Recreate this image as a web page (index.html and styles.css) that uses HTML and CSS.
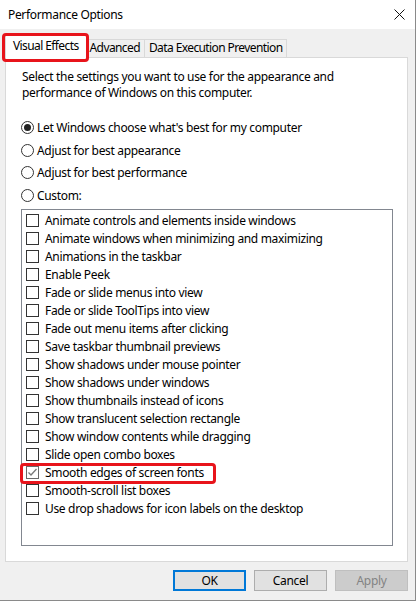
FILE: index.html
```html
<!DOCTYPE html>
<html>
  <head>
    <title>Performance Options</title>
    <link rel="stylesheet" href="styles.css">
  </head>
  <body>
    <div class="window">
      <div class="titlebar">
        <span class="title">Performance Options</span>
        <svg class="close" width="11" height="11" viewBox="0 0 11 11">
          <path d="M0.5 0.5 L10.5 10.5 M10.5 0.5 L0.5 10.5" stroke="#111" stroke-width="1" fill="none" />
        </svg>
      </div>

      <div class="content">
        <div class="tabs">
          <div class="tab active marked">Visual Effects</div>
          <div class="tab">Advanced</div>
          <div class="tab">Data Execution Prevention</div>
        </div>

        <div class="panel">
          <p class="intro">
            Select the settings you want to use for the appearance and<br />
            performance of Windows on this computer.
          </p>

          <div class="radios">
            <label class="radio"><span class="dot checked"></span>Let Windows choose what's best for my computer</label>
            <label class="radio"><span class="dot"></span>Adjust for best appearance</label>
            <label class="radio"><span class="dot"></span>Adjust for best performance</label>
            <label class="radio"><span class="dot"></span>Custom:</label>
          </div>

          <div class="list">
            <div class="item"><span class="box"></span>Animate controls and elements inside windows</div>
            <div class="item"><span class="box"></span>Animate windows when minimizing and maximizing</div>
            <div class="item"><span class="box"></span>Animations in the taskbar</div>
            <div class="item"><span class="box"></span>Enable Peek</div>
            <div class="item"><span class="box"></span>Fade or slide menus into view</div>
            <div class="item"><span class="box"></span>Fade or slide ToolTips into view</div>
            <div class="item"><span class="box"></span>Fade out menu items after clicking</div>
            <div class="item"><span class="box"></span>Save taskbar thumbnail previews</div>
            <div class="item"><span class="box"></span>Show shadows under mouse pointer</div>
            <div class="item"><span class="box"></span>Show shadows under windows</div>
            <div class="item"><span class="box"></span>Show thumbnails instead of icons</div>
            <div class="item"><span class="box"></span>Show translucent selection rectangle</div>
            <div class="item"><span class="box"></span>Show window contents while dragging</div>
            <div class="item"><span class="box"></span>Slide open combo boxes</div>
            <div class="item marked">
              <span class="box checked">
                <svg width="11" height="11" viewBox="0 0 11 11">
                  <path d="M1.5 5.5 L4 8 L9.5 2" stroke="#7a7a7a" stroke-width="1.3" fill="none" />
                </svg>
              </span>Smooth edges of screen fonts
            </div>
            <div class="item"><span class="box"></span>Smooth-scroll list boxes</div>
            <div class="item"><span class="box"></span>Use drop shadows for icon labels on the desktop</div>
          </div>
        </div>

        <div class="buttons">
          <button class="btn default">OK</button>
          <button class="btn">Cancel</button>
          <button class="btn" disabled>Apply</button>
        </div>
      </div>
    </div>
  </body>
</html>
```

FILE: styles.css
```css
body {
  margin: 0;
  font-family: "Segoe UI", "Noto Sans", sans-serif;
  font-size: 12px;
  letter-spacing: -0.33px;
  color: #000;
  background: #fff;
}
.window {
  width: 415px;
  height: 600px;
  background: #f0f0f0;
  border-right: 1px solid #8a8a8a;
  border-bottom: 1px solid #8a8a8a;
  display: flex;
  flex-direction: column;
}
.titlebar {
  height: 29px;
  background: #fff;
  display: flex;
  align-items: center;
  justify-content: space-between;
  padding: 0 10px 0 8px;
}
.title {
  font-size: 12px;
  margin-top: -1px;
}
.close {
  margin-top: -1px;
}
.content {
  padding: 5px 7px 0 5px;
}
.tabs {
  display: flex;
  align-items: flex-end;
  height: 23px;
  padding-left: 2px;
}
.tab {
  height: 17px;
  line-height: 16px;
  padding: 0 4px;
  letter-spacing: -0.6px;
  border: 1px solid #d9d9d9;
  border-bottom: none;
  margin-left: -1px;
  background: #f0f0f0;
}
.tab.active {
  height: 22px;
  line-height: 20px;
  margin-left: -2px;
  margin-right: -1px;
  padding: 0 7px;
  background: #fff;
  position: relative;
  z-index: 1;
  margin-bottom: -1px;
}
.marked {
  position: relative;
}
.marked::after {
  content: "";
  position: absolute;
  border: 3px solid #e8141b;
  border-radius: 4px;
  pointer-events: none;
}
.tab.marked::after {
  left: -4px;
  right: -3px;
  top: -3px;
  bottom: -4px;
}
.item.marked::after {
  left: -6px;
  top: -1px;
  width: 190px;
  height: 15px;
}
.panel {
  height: 505px;
  background: #fff;
  border: 1px solid #d9d9d9;
  padding: 0 14px 0 15px;
  box-sizing: border-box;
}
.intro {
  margin: 11px 0 0 1px;
  line-height: 16px;
}
.radios {
  margin-top: 15px;
  display: flex;
  flex-direction: column;
}
.radio {
  height: 22.7px;
  display: flex;
  align-items: center;
}
.dot {
  width: 11px;
  height: 11px;
  border: 1px solid #333;
  border-radius: 50%;
  margin-right: 3px;
  display: flex;
  align-items: center;
  justify-content: center;
}
.dot.checked::before {
  content: "";
  width: 7px;
  height: 7px;
  border-radius: 50%;
  background: #222;
}
.list {
  margin-top: 2px;
  height: 337px;
  border: 1px solid #828790;
  padding: 2px 4px;
  box-sizing: border-box;
}
.item {
  height: 18px;
  display: flex;
  align-items: center;
  white-space: nowrap;
}
.box {
  width: 11px;
  height: 11px;
  border: 1px solid #333;
  margin-right: 6px;
  display: flex;
  align-items: center;
  justify-content: center;
  flex: none;
}
.box.checked {
  border-color: #6a6a6a;
}
.buttons {
  display: flex;
  justify-content: flex-end;
  gap: 8px;
  margin-top: 8px;
  padding-right: 0;
}
.btn {
  width: 73px;
  height: 21px;
  font-family: inherit;
  font-size: 12px;
  letter-spacing: inherit;
  background: #e1e1e1;
  border: 1px solid #adadad;
  padding: 0;
  color: #000;
}
.btn.default {
  border: 2px solid #0078d7;
}
.btn:disabled {
  background: #cccccc;
  border-color: #bfbfbf;
  color: #838383;
}
```
